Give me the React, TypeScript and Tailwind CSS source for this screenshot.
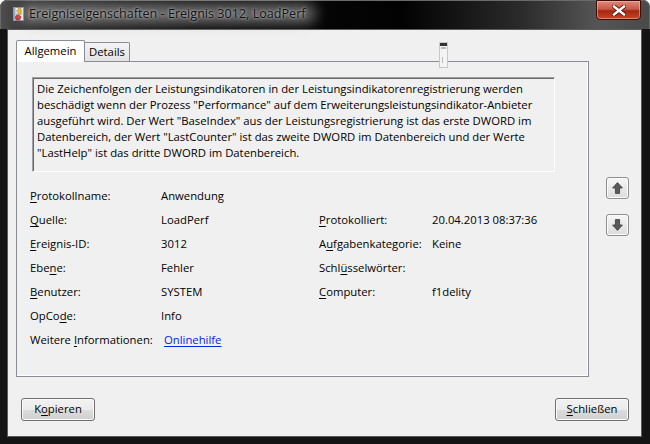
import React from "react";

function U({ children }: { children: React.ReactNode }) {
  return <span className="underline decoration-1 underline-offset-[2px]">{children}</span>;
}

function TitleIcon() {
  return (
    <svg width="11" height="14" viewBox="0 0 11 14">
      <rect x="0.5" y="0.5" width="10" height="13" fill="#f4f6fa" stroke="#7c8aa8" />
      <rect x="0.5" y="0.5" width="2" height="13" fill="#9aa8c8" />
      <line x1="3" y1="4" x2="9" y2="4" stroke="#8a96b4" />
      <line x1="3" y1="7" x2="9" y2="7" stroke="#8a96b4" />
      <line x1="3" y1="10" x2="9" y2="10" stroke="#8a96b4" />
      <rect x="5" y="1" width="3" height="6" rx="1" fill="#f2c21b" stroke="#b08410" strokeWidth="0.6" />
      <circle cx="5" cy="10.5" r="2.6" fill="#d8342a" stroke="#8c1a12" strokeWidth="0.6" />
    </svg>
  );
}

function CloseX() {
  return (
    <svg width="14" height="11" viewBox="0 0 14 11">
      <path d="M2 1.5 L12 9.5 M12 1.5 L2 9.5" stroke="#5a1208" strokeWidth="4.2" strokeLinecap="square" />
      <path d="M2 1.5 L12 9.5 M12 1.5 L2 9.5" stroke="#ffffff" strokeWidth="2.4" strokeLinecap="square" />
    </svg>
  );
}

function Arrow({ down }: { down?: boolean }) {
  return (
    <svg width="11" height="12" viewBox="0 0 11 12" className={down ? "rotate-180" : ""}>
      <path d="M5.5 0.6 L10.4 6 L7.6 6 L7.6 11.4 L3.4 11.4 L3.4 6 L0.6 6 Z" fill="#5a5a5a" stroke="#3a3a3a" strokeWidth="0.8" strokeLinejoin="round" />
    </svg>
  );
}

function NavButton({ down }: { down?: boolean }) {
  return (
    <div className="w-[23px] h-[22px] rounded-[3px] border border-[#8e8f8f] bg-gradient-to-b from-[#f6f6f6] to-[#dcdcdc] flex items-center justify-center shadow-[inset_0_0_0_1px_#fcfcfc]">
      <Arrow down={down} />
    </div>
  );
}

function DialogButton({ children }: { children: React.ReactNode }) {
  return (
    <div className="w-[74px] h-[23px] rounded-[3px] border border-[#707070] bg-[linear-gradient(to_bottom,#f2f2f2_0%,#ebebeb_50%,#dddddd_50%,#cfcfcf_100%)] shadow-[inset_0_0_0_1px_#fbfbfb] flex items-center justify-center text-[11.3px] text-black">
      {children}
    </div>
  );
}

const rows: [React.ReactNode, React.ReactNode, React.ReactNode, React.ReactNode][] = [
  [<><U>P</U>rotokollname:</>, "Anwendung", "", ""],
  [<><U>Q</U>uelle:</>, "LoadPerf", <><U>P</U>rotokolliert:</>, "20.04.2013 08:37:36"],
  [<><U>E</U>reignis-ID:</>, "3012", <>A<U>u</U>fgabenkategorie:</>, "Keine"],
  [<>Ebe<U>n</U>e:</>, "Fehler", <>Schl<U>ü</U>sselwörter:</>, ""],
  [<><U>B</U>enutzer:</>, "SYSTEM", <><U>C</U>omputer:</>, "f1delity"],
  [<>OpCo<U>d</U>e:</>, "Info", "", ""],
];

const description = [
  "Die Zeichenfolgen der Leistungsindikatoren in der Leistungsindikatorenregistrierung werden",
  "beschädigt wenn der Prozess \"Performance\" auf dem Erweiterungsleistungsindikator-Anbieter",
  "ausgeführt wird. Der Wert \"BaseIndex\" aus der Leistungsregistrierung ist das erste DWORD im",
  "Datenbereich, der Wert \"LastCounter\" ist das zweite DWORD im Datenbereich und der Werte",
  "\"LastHelp\" ist das dritte DWORD im Datenbereich.",
];

export default function App() {
  return (
    <div className="w-[650px] h-[444px] relative overflow-hidden rounded-t-[7px] bg-[#141414] flex flex-col font-['Segoe_UI','Open_Sans',sans-serif] text-[11.3px] text-black">
      {/* Title bar */}
      <div className="h-[29px] shrink-0 flex items-start bg-[linear-gradient(to_right,#4e4e4e_0%,#262626_6%,#0a0a0a_30%,#020202_62%,#2a2a2a_80%,#555_92%,#4a4a4a_100%)] border-t border-l border-r border-[#6a6a6a] rounded-t-[7px]">
        <div className="ml-[12px] mt-[6px]">
          <TitleIcon />
        </div>
        <div className="ml-[5px] mt-[4px] relative">
          {/* aero glow behind the caption */}
          <div className="absolute -left-[8px] -right-[10px] -top-[1px] -bottom-[1px] rounded-full bg-[rgba(185,185,185,0.6)] blur-[7px]" />
          <div className="relative text-[12.6px] leading-[17px] text-[#111] whitespace-nowrap [text-shadow:0_0_3px_#ddd]">
            Ereigniseigenschaften - Ereignis 3012, LoadPerf
          </div>
        </div>
        <div className="ml-auto mr-[8px] w-[45px] h-[20px] -mt-px rounded-b-[4px] border border-[#3b0d06] bg-[linear-gradient(to_bottom,#e0897a_0%,#c85a45_45%,#a3280f_55%,#c8452a_100%)] shadow-[inset_0_0_0_1px_rgba(255,200,190,0.5)] flex items-center justify-center">
          <CloseX />
        </div>
      </div>

      {/* Client area */}
      <div className="flex-1 ml-[7px] mr-[8px] mb-[7px] bg-[#f0f0f0] border border-[#5c5c5c] flex flex-col">
        <div className="flex mt-[10px] ml-[8px]">
          <div className="flex flex-col w-[573px]">
            {/* Tabs */}
            <div className="flex items-end h-[21px] relative z-10">
              <div className="w-[69px] h-[22px] -mb-px bg-white border border-b-0 border-[#898c95] rounded-t-[2px] flex items-center justify-center leading-none pb-[2px]">
                Allgemein
              </div>
              <div className="w-[45px] h-[19px] bg-gradient-to-b from-[#f3f3f3] to-[#e3e3e3] border border-l-0 border-b-0 border-[#898c95] rounded-tr-[2px] flex items-center justify-center leading-none">
                Details
              </div>
            </div>
            {/* Panel */}
            <div className="h-[316px] border border-[#898c95] bg-[#f0f0f0] flex flex-col shadow-[inset_-1px_-1px_0_#fff]">
              <div className="ml-[15px] mt-[15px] w-[523px] h-[95px] border-t border-l border-[#a0a0a0] border-b border-r border-b-[#fff] border-r-[#fff] shadow-[inset_1px_1px_0_#696969]">
                <div className="pl-[4px] pt-[3px] leading-[16px] whitespace-nowrap">
                  {description.map((l, i) => (
                    <div key={i}>{l}</div>
                  ))}
                </div>
              </div>
              <div className="ml-[13px] mt-[12px] grid grid-cols-[131px_158px_113px_1fr] auto-rows-[24px] items-center whitespace-nowrap">
                {rows.map((r, i) => (
                  <React.Fragment key={i}>
                    <div>{r[0]}</div>
                    <div>{r[1]}</div>
                    <div>{r[2]}</div>
                    <div>{r[3]}</div>
                  </React.Fragment>
                ))}
                <div>
                  Weitere <U>I</U>nformationen:
                </div>
                <div className="pl-[3px] text-[#0026e6] underline decoration-1 underline-offset-[2px]">Onlinehilfe</div>
              </div>
            </div>
          </div>
          <div className="ml-[17px] mt-[137px] flex flex-col gap-[15px]">
            <NavButton />
            <NavButton down />
          </div>
        </div>
        <div className="flex justify-between mt-[21px] ml-[13px] mr-[12px]">
          <DialogButton>
            K<U>o</U>pieren
          </DialogButton>
          <DialogButton>
            <U>S</U>chließen
          </DialogButton>
        </div>
      </div>

      {/* odd little grip over the tab strip */}
      <div className="absolute left-[439px] top-[42px] w-[9px] h-[26px] border border-[#c8c8c8] bg-[#f4f4f4] flex flex-col">
        <div className="h-[3px] bg-[#333]" />
        <div className="h-[2px] mt-[1px] mx-[1px] bg-[#bbb]" />
        <div className="mt-[8px] ml-[2px] w-[3px] h-[6px] border-l border-[#bbb]" />
      </div>
    </div>
  );
}
